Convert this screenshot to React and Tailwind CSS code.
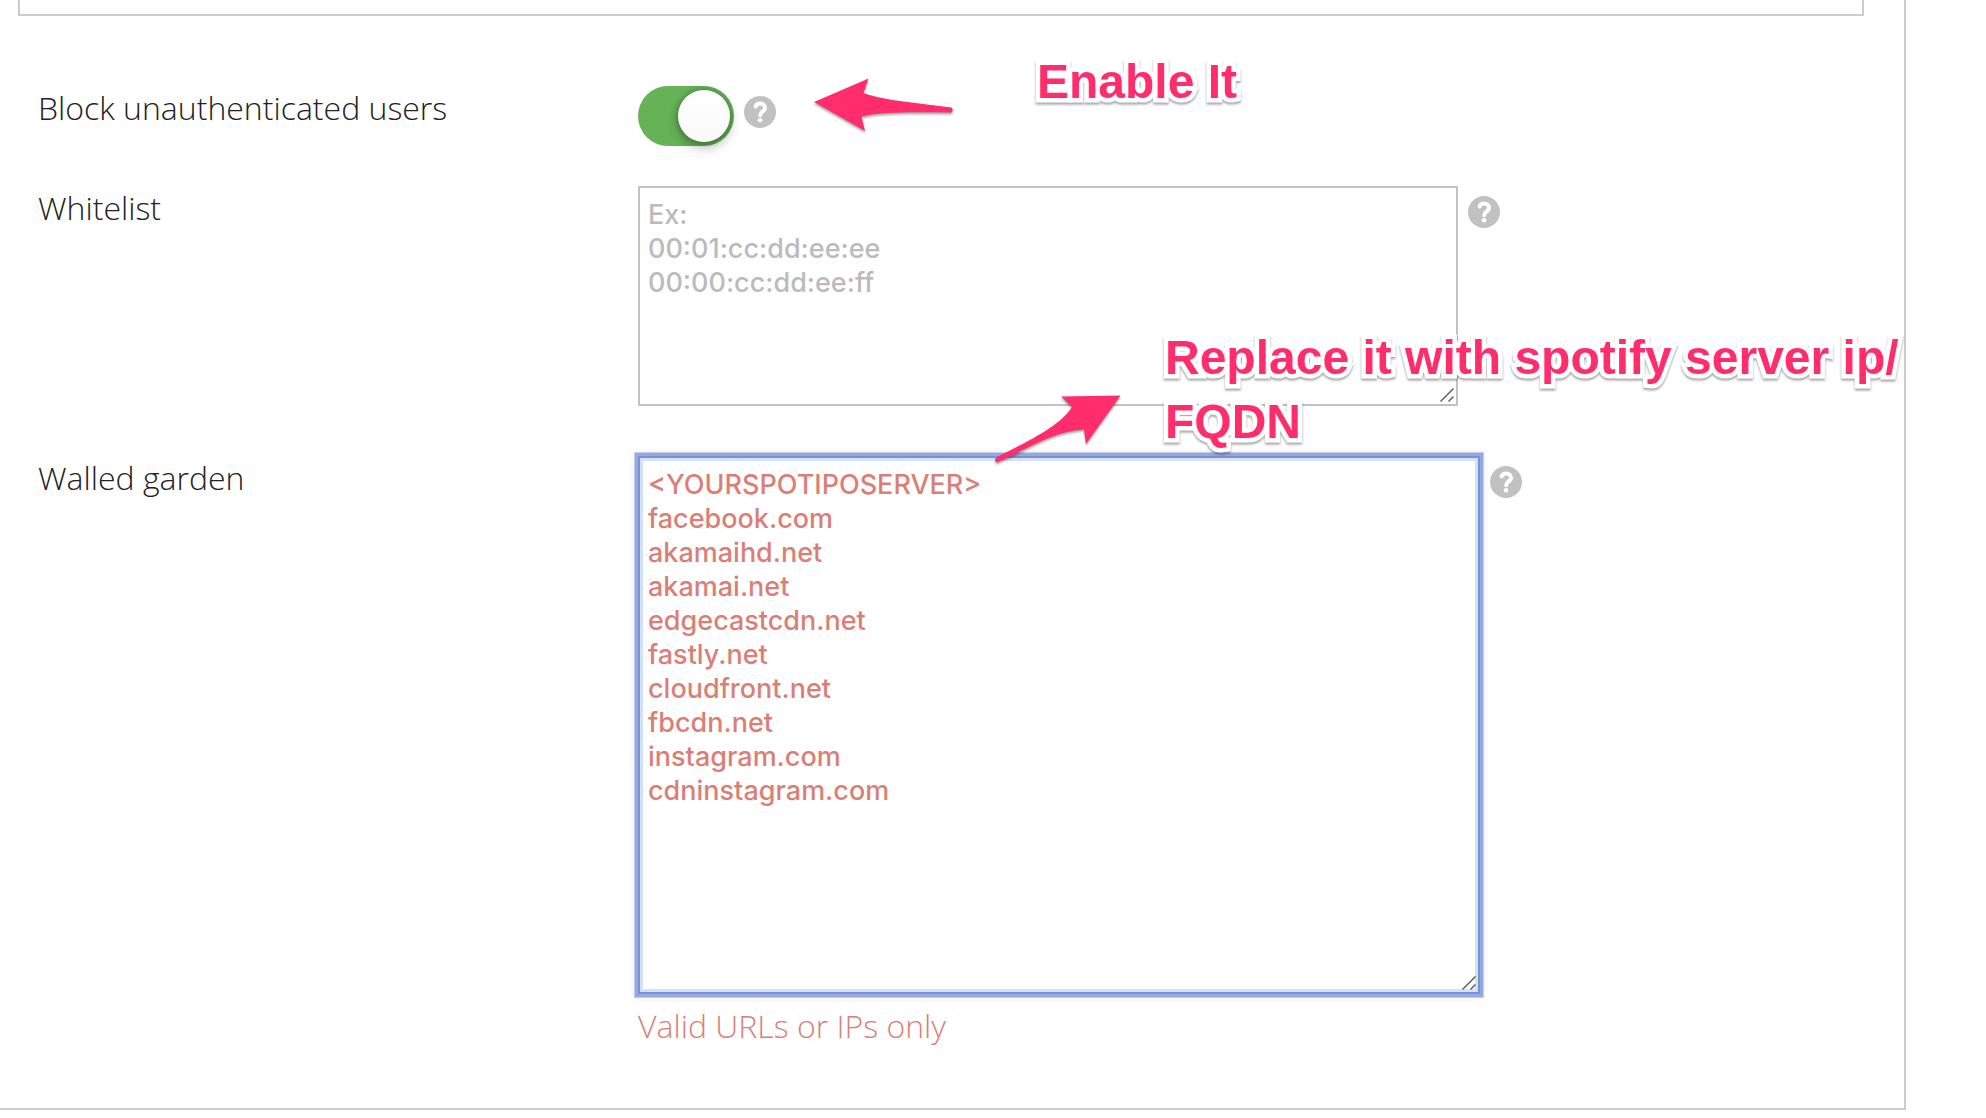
import React, { useState } from 'react';

const WALLED_GARDEN_HOSTS = [
  '<YOURSPOTIPOSERVER>',
  'facebook.com',
  'akamaihd.net',
  'akamai.net',
  'edgecastcdn.net',
  'fastly.net',
  'cloudfront.net',
  'fbcdn.net',
  'instagram.com',
  'cdninstagram.com',
].join('\n');

const HelpButton = ({ topic }) => (
  <button type="button" aria-label={`Help: ${topic}`} className="mt-[10px] h-8 w-8 shrink-0 rounded-full">
    <svg viewBox="0 0 32 32" className="h-8 w-8" aria-hidden="true">
      <circle cx="16" cy="16" r="16" fill="#c1c1c1" />
      <path
        d="M11.600 10.400C12.400 8.500 14 7.600 16 7.600c2.900 0 5 1.600 5 4.100 0 1.900-1.100 2.900-2.600 3.900-1.500 1-2.200 1.700-2.200 3.700"
        fill="none"
        stroke="#fff"
        strokeWidth="4"
        strokeLinecap="round"
      />
      <circle cx="16" cy="24.300" r="2.300" fill="#fff" />
    </svg>
  </button>
);

// Diagonal grip drawn in the corner of a textarea
const ResizeGrip = () => (
  <svg viewBox="0 0 14 14" className="pointer-events-none absolute right-1 bottom-1 h-[14px] w-[14px]" aria-hidden="true">
    <path d="M0.500 13.500L13.500 0.500M8.500 13.500L13.500 8.500" stroke="#555" strokeWidth="1.400" fill="none" />
  </svg>
);

const FieldRow = ({ id, label, children }) => (
  <div className="flex items-start">
    <label htmlFor={id} className="w-[600px] shrink-0 text-[32px] leading-[44px] font-light text-[#222]">
      {label}
    </label>
    {children}
  </div>
);

const Note = ({ className, children }) => (
  <p
    className={`pointer-events-none absolute z-10 whitespace-nowrap font-['Liberation_Sans',Arial,sans-serif] text-[48px] leading-[64px] font-bold text-[#ff2d6c] [-webkit-text-stroke:9px_white] [paint-order:stroke_fill] [filter:drop-shadow(0_2px_1px_rgba(0,0,0,0.35))] ${className}`}
  >
    {children}
  </p>
);

const NoteArrow = ({ className, viewBox, d }) => (
  <svg
    viewBox={viewBox}
    className={`pointer-events-none absolute z-10 overflow-visible [filter:drop-shadow(0_2px_1px_rgba(0,0,0,0.35))] ${className}`}
    aria-hidden="true"
  >
    <path d={d} fill="#ff2d6c" />
  </svg>
);

const App = () => {
  const [blockUsers, setBlockUsers] = useState(true);
  const [whitelist, setWhitelist] = useState('');
  const [walledGarden, setWalledGarden] = useState(WALLED_GARDEN_HOSTS);

  return (
    <main className="bg-white font-['Open_Sans',sans-serif]">
      <section className="mr-20 border-r-2 border-b-2 border-[#ccc] pb-[60px]">
        <div className="mr-10 ml-[18px] h-4 border-2 border-t-0 border-[#ccc]"></div>

        <form className="mt-[70px] pl-[38px]">
          <div className="relative mb-10">
            <FieldRow id="block-users" label="Block unauthenticated users">
              <div className="flex items-start gap-[10px]">
                <input
                  id="block-users"
                  type="checkbox"
                  checked={blockUsers}
                  onChange={(e) => setBlockUsers(e.target.checked)}
                  className="flex h-[60px] w-24 appearance-none items-center rounded-full bg-[#ccc] px-1 before:h-[52px] before:w-[52px] before:rounded-full before:bg-linear-to-b before:from-white before:to-[#fafafa] before:shadow-[0_6px_12px_rgba(0,0,0,0.25),0_0_6px_rgba(0,0,0,0.3)] before:content-[''] checked:justify-end checked:bg-[#65b257]"
                />
                <HelpButton topic="Block unauthenticated users" />
              </div>
            </FieldRow>
            <NoteArrow
              className="top-[-8px] left-[776px] h-[54px] w-[140px]"
              viewBox="0 0 140 54"
              d="M0 24L54.500 0.500L49.500 15C72 23 105 25 137.500 29.500Q140 32 137.500 34.500C105 34.500 72 33 47.500 38.500L51 53Z"
            />
            <Note className="top-[-36px] left-[999px]">Enable It</Note>
          </div>

          <div className="relative mb-[50px]">
            <FieldRow id="whitelist" label="Whitelist">
              <div className="flex items-start gap-[10px]">
                <div className="relative">
                  <textarea
                    id="whitelist"
                    value={whitelist}
                    onChange={(e) => setWhitelist(e.target.value)}
                    placeholder={'Ex:\n00:01:cc:dd:ee:ee\n00:00:cc:dd:ee:ff'}
                    className="block h-[220px] w-[820px] resize-none border-2 border-[#c2c2c2] px-2 py-[10px] font-['Inter',sans-serif] text-[27px] leading-[34px] font-medium outline-none placeholder:text-[#bbb]"
                  />
                  <ResizeGrip />
                </div>
                <HelpButton topic="Whitelist" />
              </div>
            </FieldRow>
            <Note className="top-[140px] left-[1127px]">
              Replace it with spotify server ip/
              <br />
              FQDN
            </Note>
            <NoteArrow
              className="top-[209px] left-[957px] h-[68px] w-[126px]"
              viewBox="0 0 126 68"
              d="M125.500 0.500L66 1.500L77 12C66 30 36 45 1 62.500Q-1 66 2 67.500C36 52 60 36 89 34.500L91 49Z"
            />
          </div>

          <FieldRow id="walled-garden" label="Walled garden">
            <div>
              <div className="flex items-start gap-[10px]">
                <div className="relative">
                  <textarea
                    id="walled-garden"
                    value={walledGarden}
                    onChange={(e) => setWalledGarden(e.target.value)}
                    spellCheck={false}
                    aria-invalid="true"
                    aria-describedby="walled-garden-error"
                    className="block h-[538px] w-[842px] resize-none border-2 border-[#8090cc] px-2 py-[10px] font-['Inter',sans-serif] text-[27px] leading-[34px] font-medium text-[#db7f76] shadow-[0_0_0_3px_#8faae5,0_0_0_4px_#c3cdee,0_0_6px_5px_#fbeff0,inset_0_0_0_3px_#d3e2f9] outline-none"
                  />
                  <ResizeGrip />
                </div>
                <HelpButton topic="Walled garden" />
              </div>
              <p id="walled-garden-error" className="mt-[10px] text-[32px] leading-[44px] font-light text-[#db7f76]">
                Valid URLs or IPs only
              </p>
            </div>
          </FieldRow>
        </form>
      </section>
    </main>
  );
};

export default App;
